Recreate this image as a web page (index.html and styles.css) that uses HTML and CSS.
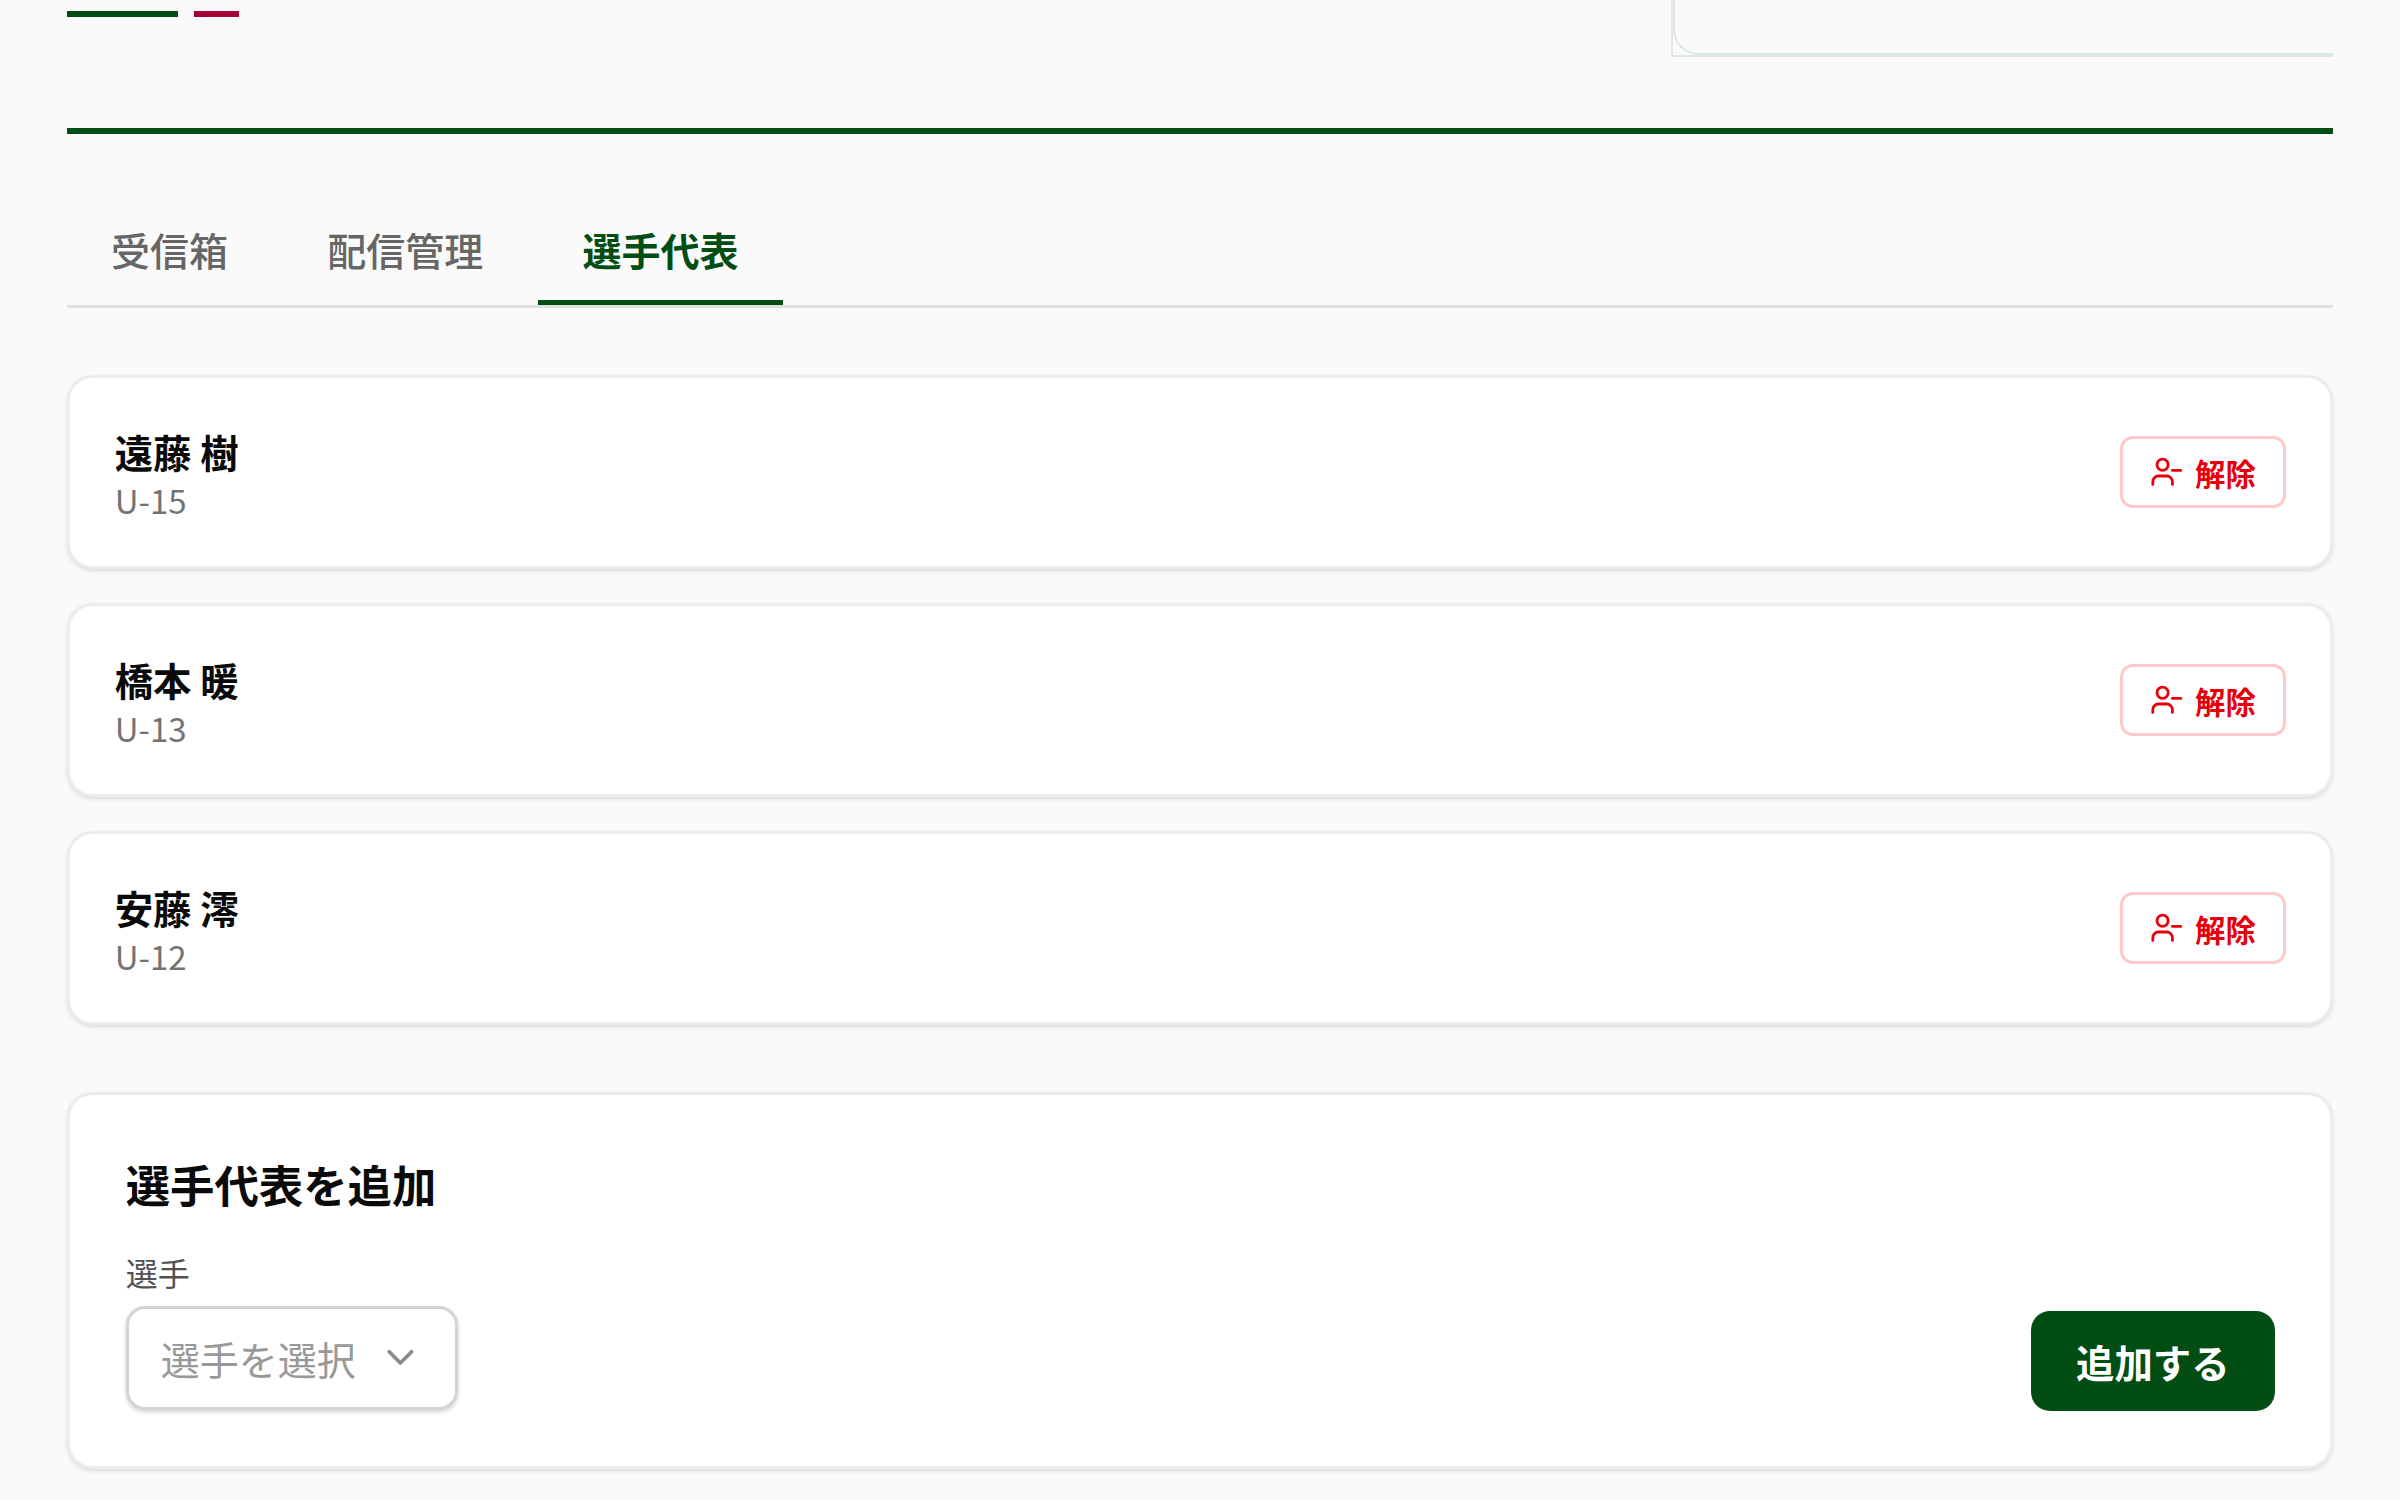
FILE: index.html
```html
<!DOCTYPE html>
<html lang="ja">
<head>
    <meta charset="UTF-8">
    <meta name="viewport" content="width=device-width, initial-scale=1.0">
    <title>選手代表</title>
    <link rel="stylesheet" href="styles.css">
</head>
<body>
    <header class="top">
        <div class="stripes">
            <span class="stripe-green"></span>
            <span class="stripe-red"></span>
        </div>
        <div class="top-frame">
            <div class="top-frame-inner"></div>
        </div>
    </header>

    <nav class="tabs">
        <button class="tab">受信箱</button>
        <button class="tab">配信管理</button>
        <button class="tab active">選手代表</button>
    </nav>

    <!-- 選手代表の一覧 -->
    <section class="rep-list">
        <div class="card rep">
            <div class="rep-info">
                <div class="rep-name">遠藤 樹</div>
                <div class="rep-team">U-15</div>
            </div>
            <button class="remove-btn">
                <svg class="remove-icon" viewBox="0 0 24 24"><path d="M16 21v-2a4 4 0 0 0-4-4H6a4 4 0 0 0-4 4v2"/><circle cx="9" cy="7" r="4"/><line x1="16" y1="11" x2="22" y2="11"/></svg>
                <span class="remove-label">解除</span>
            </button>
        </div>
        <div class="card rep">
            <div class="rep-info">
                <div class="rep-name">橋本 暖</div>
                <div class="rep-team">U-13</div>
            </div>
            <button class="remove-btn">
                <svg class="remove-icon" viewBox="0 0 24 24"><path d="M16 21v-2a4 4 0 0 0-4-4H6a4 4 0 0 0-4 4v2"/><circle cx="9" cy="7" r="4"/><line x1="16" y1="11" x2="22" y2="11"/></svg>
                <span class="remove-label">解除</span>
            </button>
        </div>
        <div class="card rep">
            <div class="rep-info">
                <div class="rep-name">安藤 澪</div>
                <div class="rep-team">U-12</div>
            </div>
            <button class="remove-btn">
                <svg class="remove-icon" viewBox="0 0 24 24"><path d="M16 21v-2a4 4 0 0 0-4-4H6a4 4 0 0 0-4 4v2"/><circle cx="9" cy="7" r="4"/><line x1="16" y1="11" x2="22" y2="11"/></svg>
                <span class="remove-label">解除</span>
            </button>
        </div>
    </section>

    <!-- 追加フォーム -->
    <section class="card add-card">
        <h3 class="add-title">選手代表を追加</h3>
        <div class="add-row">
            <div>
                <label class="field-label">選手</label>
                <div class="select">
                    <span>選手を選択</span>
                    <svg class="select-icon" viewBox="0 0 24 24"><path d="m6 9 6 6 6-6"/></svg>
                </div>
            </div>
            <button class="add-btn">追加する</button>
        </div>
    </section>
</body>
</html>
```

FILE: styles.css
```css
* {
    box-sizing: border-box;
}
body {
    margin: 0;
    padding: 0 66.67px;
    height: 1500px;
    overflow: hidden;
    background-color: #fafafa;
    color: #0a0a0a;
    font-family: "Noto Sans CJK JP", "Noto Sans", sans-serif;
}
button {
    font-family: inherit;
    cursor: pointer;
}
.top {
    display: flex;
    justify-content: space-between;
    height: 133.5px;
    border-bottom: 6px solid #014d14;
}
.stripes {
    display: flex;
    gap: 16.8px;
    margin-top: 11px;
}
.stripes span {
    height: 6px;
}
.stripe-green {
    width: 111px;
    background-color: #014d14;
}
.stripe-red {
    width: 44.8px;
    background-color: #a50034;
}
.top-frame {
    width: 662px;
    height: 57px;
    border-left: 2px solid #dfe9e4;
    border-bottom: 2px solid #dfe9e4;
}
.top-frame-inner {
    height: 100%;
    border-left: 2px solid #dfe9e4;
    border-bottom: 2px solid #dfe9e4;
    border-radius: 0 0 0 25.6px;
}
.tabs {
    display: flex;
    gap: 10.4px;
    height: 174.5px;
    margin-bottom: 66.5px;
    align-items: flex-end;
    border-bottom: 3px solid #e0e0e0;
}
.tab {
    padding: 0 44.4px 21px;
    font-size: 39px;
    line-height: 57.6px;
    font-weight: 500;
    color: #666;
    background: none;
    border: none;
    border-bottom: 5px solid transparent;
}
.tab.active {
    color: #014d14;
    font-weight: 700;
    border-bottom-color: #014d14;
}
.card {
    background-color: #fff;
    border: 3px solid #ececec;
    border-radius: 25.6px;
    box-shadow: 0 2px 4px rgba(0, 0, 0, 0.12);
}
.rep-list {
    display: flex;
    flex-direction: column;
    gap: 34px;
    margin-bottom: 67px;
}
.rep {
    display: flex;
    align-items: center;
    justify-content: space-between;
    height: 194px;
    padding: 0 44.5px 0 45px;
}
.rep-info {
    padding-top: 3px;
}
.rep-name {
    font-size: 38.4px;
    line-height: 54px;
    font-weight: 700;
}
.rep-team {
    font-size: 33px;
    line-height: 45px;
    color: #737373;
}
.remove-btn {
    display: flex;
    align-items: center;
    gap: 11px;
    height: 72px;
    padding: 0 27px;
    font-size: 30.4px;
    font-weight: 700;
    color: #e7000b;
    background-color: #fff;
    border: 3px solid #ffc9c9;
    border-radius: 12.8px;
}
.remove-label {
    margin-top: 2px;
}
.remove-icon {
    width: 33.6px;
    height: 33.6px;
    fill: none;
    stroke: currentColor;
    stroke-width: 2;
    stroke-linecap: round;
    stroke-linejoin: round;
}
.add-card {
    height: 377px;
    padding: 57px 55.5px 0 56px;
}
.add-title {
    margin: 0 0 33px;
    font-size: 44.4px;
    line-height: 64px;
    font-weight: 700;
}
.add-row {
    display: flex;
    align-items: flex-end;
    justify-content: space-between;
}
.field-label {
    display: block;
    margin-bottom: 11px;
    font-size: 32px;
    line-height: 46px;
    color: #525252;
}
.select {
    display: flex;
    align-items: center;
    justify-content: space-between;
    width: 332px;
    height: 104px;
    padding: 0 32px 0 32px;
    font-size: 39px;
    color: #999;
    background-color: #fff;
    border: 3px solid #d4d4d4;
    border-radius: 19.2px;
    box-shadow: 0 2px 4px rgba(0, 0, 0, 0.18);
}
.select-icon {
    width: 44.8px;
    height: 44.8px;
    fill: none;
    stroke: #8a8a8a;
    stroke-width: 2;
    stroke-linecap: round;
    stroke-linejoin: round;
}
.add-btn {
    width: 244px;
    height: 100px;
    margin-bottom: -1px;
    font-size: 38.4px;
    font-weight: 700;
    color: #fff;
    background-color: #014d14;
    border: none;
    border-radius: 19.2px;
}
```
